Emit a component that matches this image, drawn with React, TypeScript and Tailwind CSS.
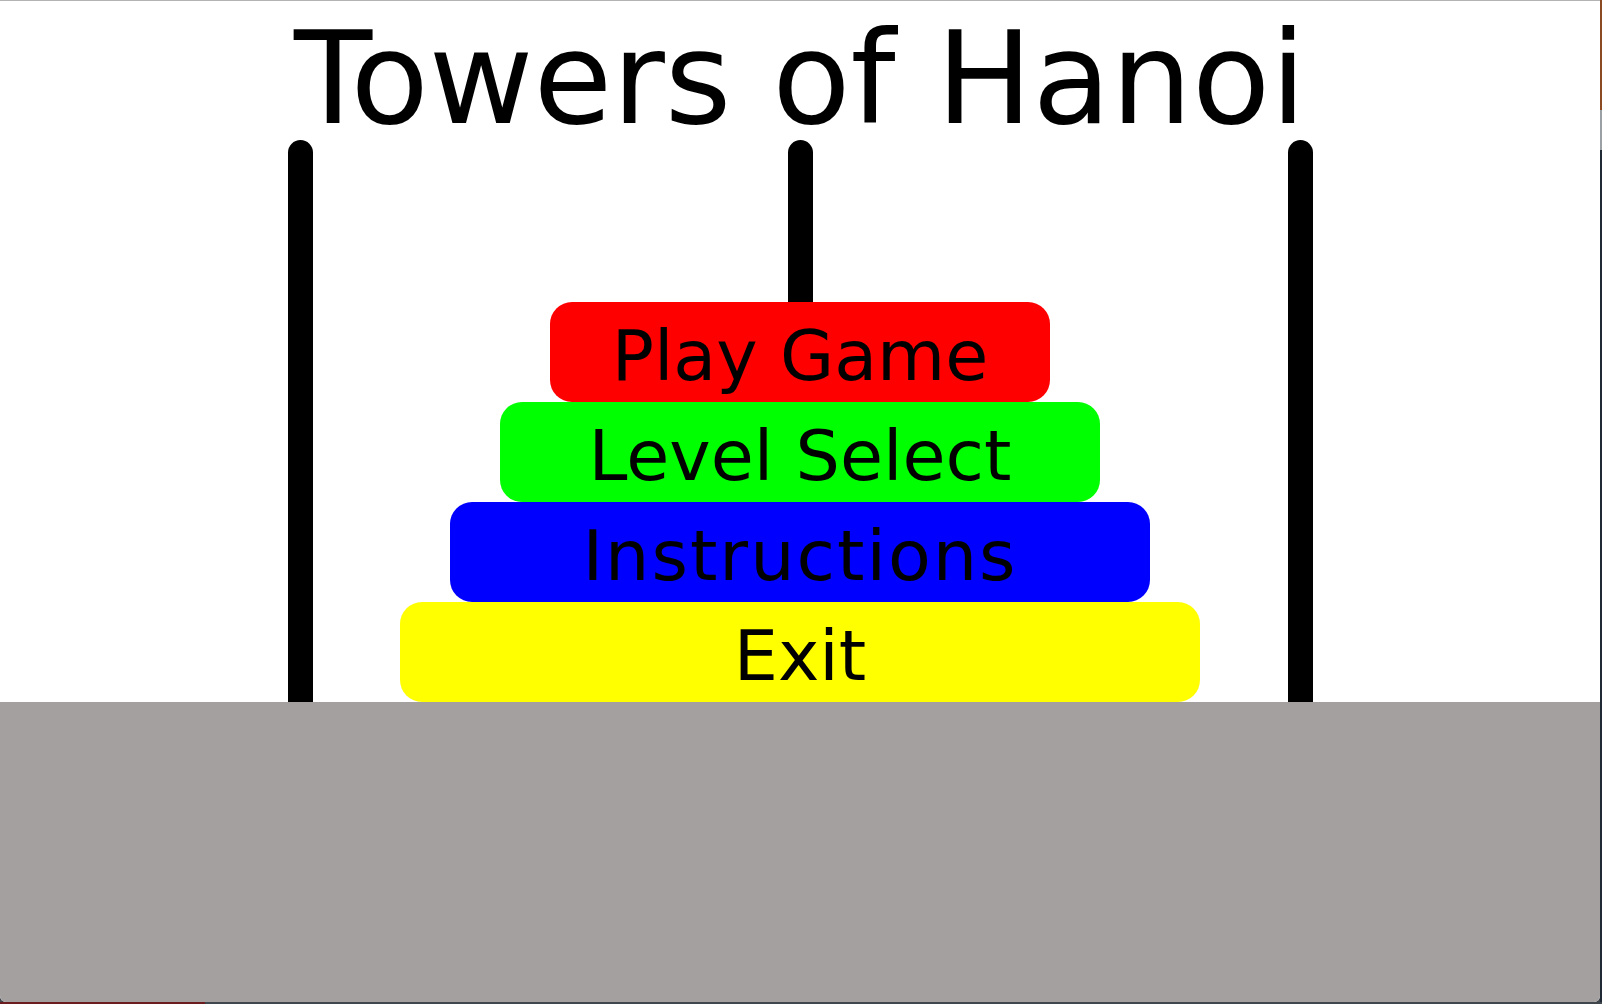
import React from 'react';

// Disks double as the menu buttons, smallest on top
const disks = [
  { label: 'Play Game', width: 'w-[500px]', color: 'bg-[#ff0000]', extra: '' },
  { label: 'Level Select', width: 'w-[600px]', color: 'bg-[#00ff00]', extra: '' },
  { label: 'Instructions', width: 'w-[700px]', color: 'bg-[#0000ff]', extra: 'tracking-[2px]' },
  { label: 'Exit', width: 'w-[800px]', color: 'bg-[#ffff00]', extra: '' },
];

const Pole = () => (
  <div className="flex justify-center">
    <div className="w-[25px] h-full bg-black rounded-t-full" />
  </div>
);

export default function App() {
  return (
    <div
      className="relative w-[1602px] h-[1004px] bg-[#3f474d] overflow-hidden"
      style={{ fontFamily: '"DejaVu Sans", "Lucida Grande", sans-serif' }}
    >
      {/* desktop wallpaper peeking out behind the window */}
      <div className="absolute right-0 top-0 w-[2px] h-[110px] bg-[#8c4a22]" />
      <div className="absolute right-0 top-[110px] w-[2px] h-[40px] bg-[#9aa0a4]" />
      <div className="absolute right-0 top-[150px] w-[2px] h-[852px] bg-[#1f2a35]" />
      <div className="absolute left-0 bottom-0 w-[205px] h-[2px] bg-[#6b1c1f]" />

      <div className="relative w-[1600px] h-[1002px] flex flex-col border-t border-[#b3b3b3] rounded-b-[6px] overflow-hidden bg-white">
        <div className="h-[139px] pt-[14px] text-center text-black text-[128px] leading-none">
          Towers of Hanoi
        </div>

        <div className="grid h-[562px]">
          <div className="col-start-1 row-start-1 grid grid-cols-3 px-[50px]">
            <Pole />
            <Pole />
            <Pole />
          </div>
          <div className="col-start-1 row-start-1 flex flex-col items-center justify-end">
            {disks.map((d) => (
              <button
                key={d.label}
                className={`${d.width} ${d.color} ${d.extra} h-[100px] rounded-[22px] flex items-center justify-center pt-[8px] text-[70px] leading-none text-black cursor-pointer`}
              >
                {d.label}
              </button>
            ))}
          </div>
        </div>

        <div className="flex-1 bg-[#a4a09f]" />
      </div>
    </div>
  );
}
